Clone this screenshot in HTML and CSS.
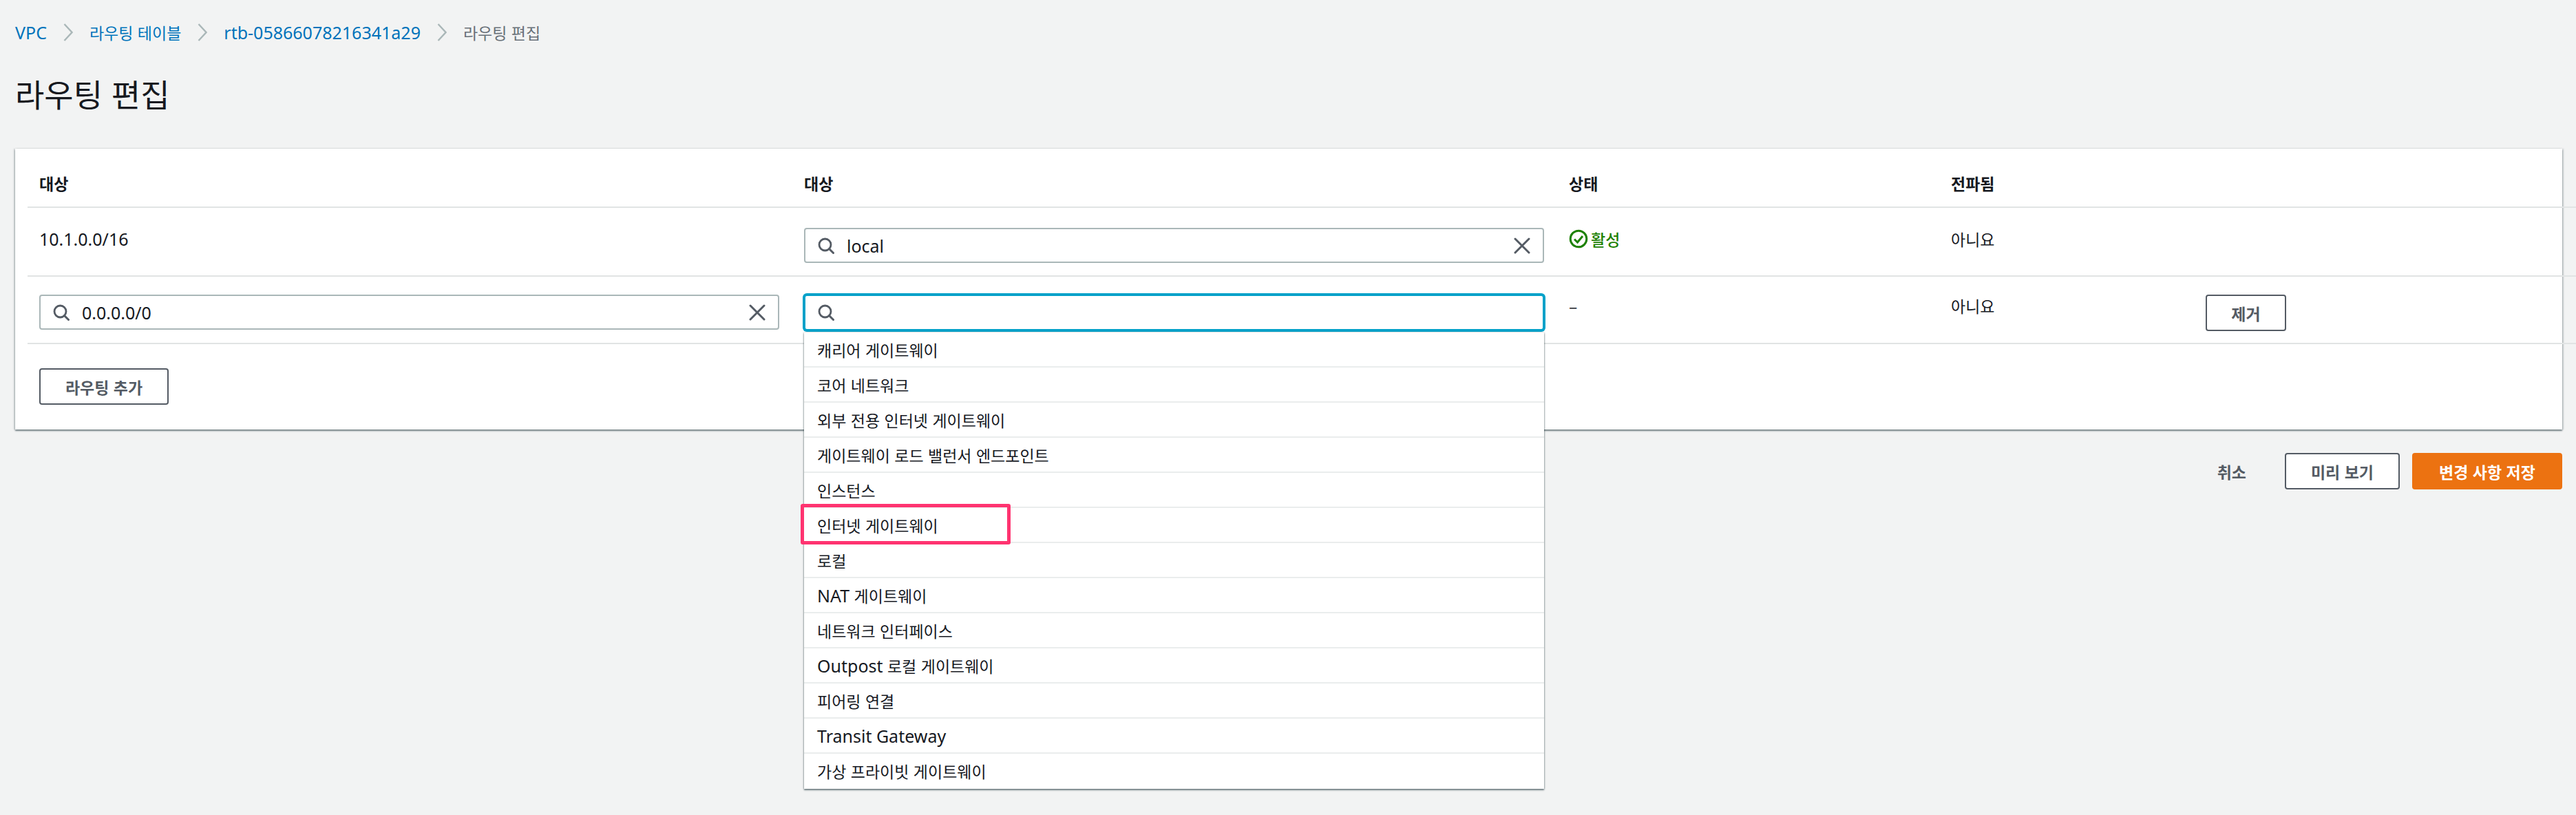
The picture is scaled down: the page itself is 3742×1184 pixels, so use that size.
FILE: index.html
```html
<!DOCTYPE html>
<html lang="ko">
<head>
<meta charset="UTF-8" />
<title>라우팅 편집</title>
<link rel="stylesheet" href="styles.css">
</head>
<body>

<svg class="defs" width="0" height="0">
  <symbol id="i-search" viewBox="0 0 24 24">
    <circle cx="10.5" cy="10.5" r="8.5" fill="none" stroke="currentColor" stroke-width="2.8" />
    <path d="M16.5 16.5l6 6" fill="none" stroke="currentColor" stroke-width="3" stroke-linecap="round" />
  </symbol>
  <symbol id="i-clear" viewBox="0 0 24 24">
    <path d="M2 2l20 20M22 2L2 22" fill="none" stroke="currentColor" stroke-width="3" stroke-linecap="round" />
  </symbol>
  <symbol id="i-chevron" viewBox="0 0 14 26">
    <path d="M1.5 1l11 12-11 12" fill="none" stroke="currentColor" stroke-width="2.4" />
  </symbol>
</svg>

<nav class="crumbs">
  <a href="#" class="lat">VPC</a>
  <svg class="chev"><use href="#i-chevron" /></svg>
  <a href="#">라우팅 테이블</a>
  <svg class="chev"><use href="#i-chevron" /></svg>
  <a href="#" class="lat">rtb-05866078216341a29</a>
  <svg class="chev"><use href="#i-chevron" /></svg>
  <span>라우팅 편집</span>
</nav>

<h1>라우팅 편집</h1>

<section class="card">
  <div class="row head">
    <div>대상</div>
    <div>대상</div>
    <div>상태</div>
    <div>전파됨</div>
    <div></div>
  </div>

  <div class="row first">
    <div class="txt lat">10.1.0.0/16</div>
    <div class="cell-input">
      <div class="search">
        <svg class="ico"><use href="#i-search" /></svg>
        <span class="lat val">local</span>
        <svg class="ico clear"><use href="#i-clear" /></svg>
      </div>
    </div>
    <div class="txt status">
      <svg class="check" viewBox="0 0 28 28">
        <circle cx="14" cy="14" r="11.8" fill="none" stroke="currentColor" stroke-width="3" />
        <path d="M8 14.5l4.5 4.5L20 10" fill="none" stroke="currentColor" stroke-width="3" />
      </svg>
      활성
    </div>
    <div class="txt">아니요</div>
    <div></div>
  </div>

  <div class="row second">
    <div class="cell-input">
      <div class="search">
        <svg class="ico"><use href="#i-search" /></svg>
        <span class="lat val">0.0.0.0/0</span>
        <svg class="ico clear"><use href="#i-clear" /></svg>
      </div>
    </div>
    <div class="cell-input drop-wrap">
      <div class="search focused">
        <svg class="ico"><use href="#i-search" /></svg>
      </div>
      <ul class="dropdown">
        <li>캐리어 게이트웨이</li>
        <li>코어 네트워크</li>
        <li>외부 전용 인터넷 게이트웨이</li>
        <li>게이트웨이 로드 밸런서 엔드포인트</li>
        <li>인스턴스</li>
        <li class="marked">인터넷 게이트웨이<span class="callout"></span></li>
        <li>로컬</li>
        <li><span class="lat">NAT</span> 게이트웨이</li>
        <li>네트워크 인터페이스</li>
        <li><span class="lat">Outpost</span> 로컬 게이트웨이</li>
        <li>피어링 연결</li>
        <li class="lat">Transit Gateway</li>
        <li>가상 프라이빗 게이트웨이</li>
      </ul>
    </div>
    <div class="txt">–</div>
    <div class="txt">아니요</div>
    <div><button class="btn remove">제거</button></div>
  </div>

  <div class="card-foot">
    <button class="btn add">라우팅 추가</button>
  </div>
</section>

<div class="actions">
  <a href="#" class="cancel">취소</a>
  <button class="btn preview">미리 보기</button>
  <button class="btn primary">변경 사항 저장</button>
</div>

</body>
</html>
```

FILE: styles.css
```css
* {
  box-sizing: border-box;
}
body {
  margin: 0;
  min-height: 1184px;
  padding: 31px 20px 0 22px;
  background: #f2f3f3;
  color: #16191f;
  font-family: "Noto Sans CJK KR", "Noto Sans", sans-serif;
  font-size: 23px;
  line-height: 32px;
}
.defs {
  position: absolute;
}
.lat {
  font-family: "Noto Sans", "Noto Sans CJK KR", sans-serif;
  font-size: 25px;
}

.crumbs {
  display: flex;
  align-items: center;
  gap: 24px;
  height: 32px;
  color: #687078;
}
.crumbs a {
  color: #0073bb;
  text-decoration: none;
}
.chev {
  width: 14px;
  height: 26px;
  color: #aab7b8;
}

h1 {
  margin: 42px 0 51px;
  font-size: 46px;
  font-weight: 400;
  line-height: 60px;
}

.card {
  background: white;
  height: 408px;
  padding-left: 18px;
  box-shadow: 0 2px 2px rgba(0,28,36,0.5), 2px 0 2px rgba(0,28,36,0.15), -2px 0 2px rgba(0,28,36,0.15);
}
.row {
  display: grid;
  grid-template-columns: 1111px 1111px 555px 370px 1fr;
  margin-right: -20px;
  border-bottom: 2px solid #e1e4e4;
}
.row > div {
  padding-left: 17px;
}
.head {
  height: 86px;
  padding-top: 34px;
  font-weight: 700;
}
.first {
  height: 100px;
  padding-top: 29px;
}
.second {
  height: 98px;
  padding-top: 26px;
}
.cell-input {
  padding-right: 19px;
}

.search {
  display: flex;
  align-items: center;
  height: 51px;
  padding: 0 18px;
  background: white;
  border: 2px solid #aab7b8;
  border-radius: 4px;
  color: #545b64;
}
.search.focused {
  height: 52px;
  border-color: #00a1c9;
  box-shadow: 0 0 0 2px #00a1c9;
}
.ico {
  flex: none;
  width: 24px;
  height: 24px;
}
.val {
  margin-left: 18px;
  color: #16191f;
}
.clear {
  margin-left: auto;
}

.status {
  display: flex;
  align-items: center;
  gap: 4px;
  height: 32px;
  color: #1d8102;
  font-weight: 500;
}
.check {
  width: 28px;
  height: 28px;
}

.drop-wrap {
  position: relative;
}
.dropdown {
  position: absolute;
  top: 55px;
  left: 17px;
  right: 19px;
  z-index: 2;
  margin: 0;
  padding: 0;
  list-style: none;
  background: white;
  box-shadow: 0 2px 2px rgba(0,28,36,0.5), 1px 0 2px rgba(0,28,36,0.2), -1px 0 2px rgba(0,28,36,0.2);
}
.dropdown li {
  position: relative;
  height: 51px;
  padding: 9px 19px 0;
  border-bottom: 2px solid #eaeded;
}
.dropdown li:last-child {
  border-bottom: 0;
}
.callout {
  position: absolute;
  top: -6px;
  left: -5px;
  width: 305px;
  height: 59px;
  border: 5px solid #ff3370;
  border-radius: 3px;
}

.btn {
  height: 53px;
  padding: 0;
  background: white;
  border: 2px solid #545b64;
  border-radius: 4px;
  color: #545b64;
  font-family: inherit;
  font-size: 23px;
  font-weight: 700;
}
.remove {
  width: 117px;
}
.card-foot {
  padding: 35px 0 0 17px;
}
.add {
  width: 188px;
}

.actions {
  display: flex;
  align-items: center;
  justify-content: flex-end;
  gap: 18px;
  margin-top: 34px;
}
.cancel {
  margin-right: 38px;
  color: #545b64;
  font-weight: 700;
  text-decoration: none;
}
.preview {
  width: 167px;
}
.primary {
  width: 218px;
  background: #ec7211;
  border-color: #ec7211;
  color: white;
}
```
